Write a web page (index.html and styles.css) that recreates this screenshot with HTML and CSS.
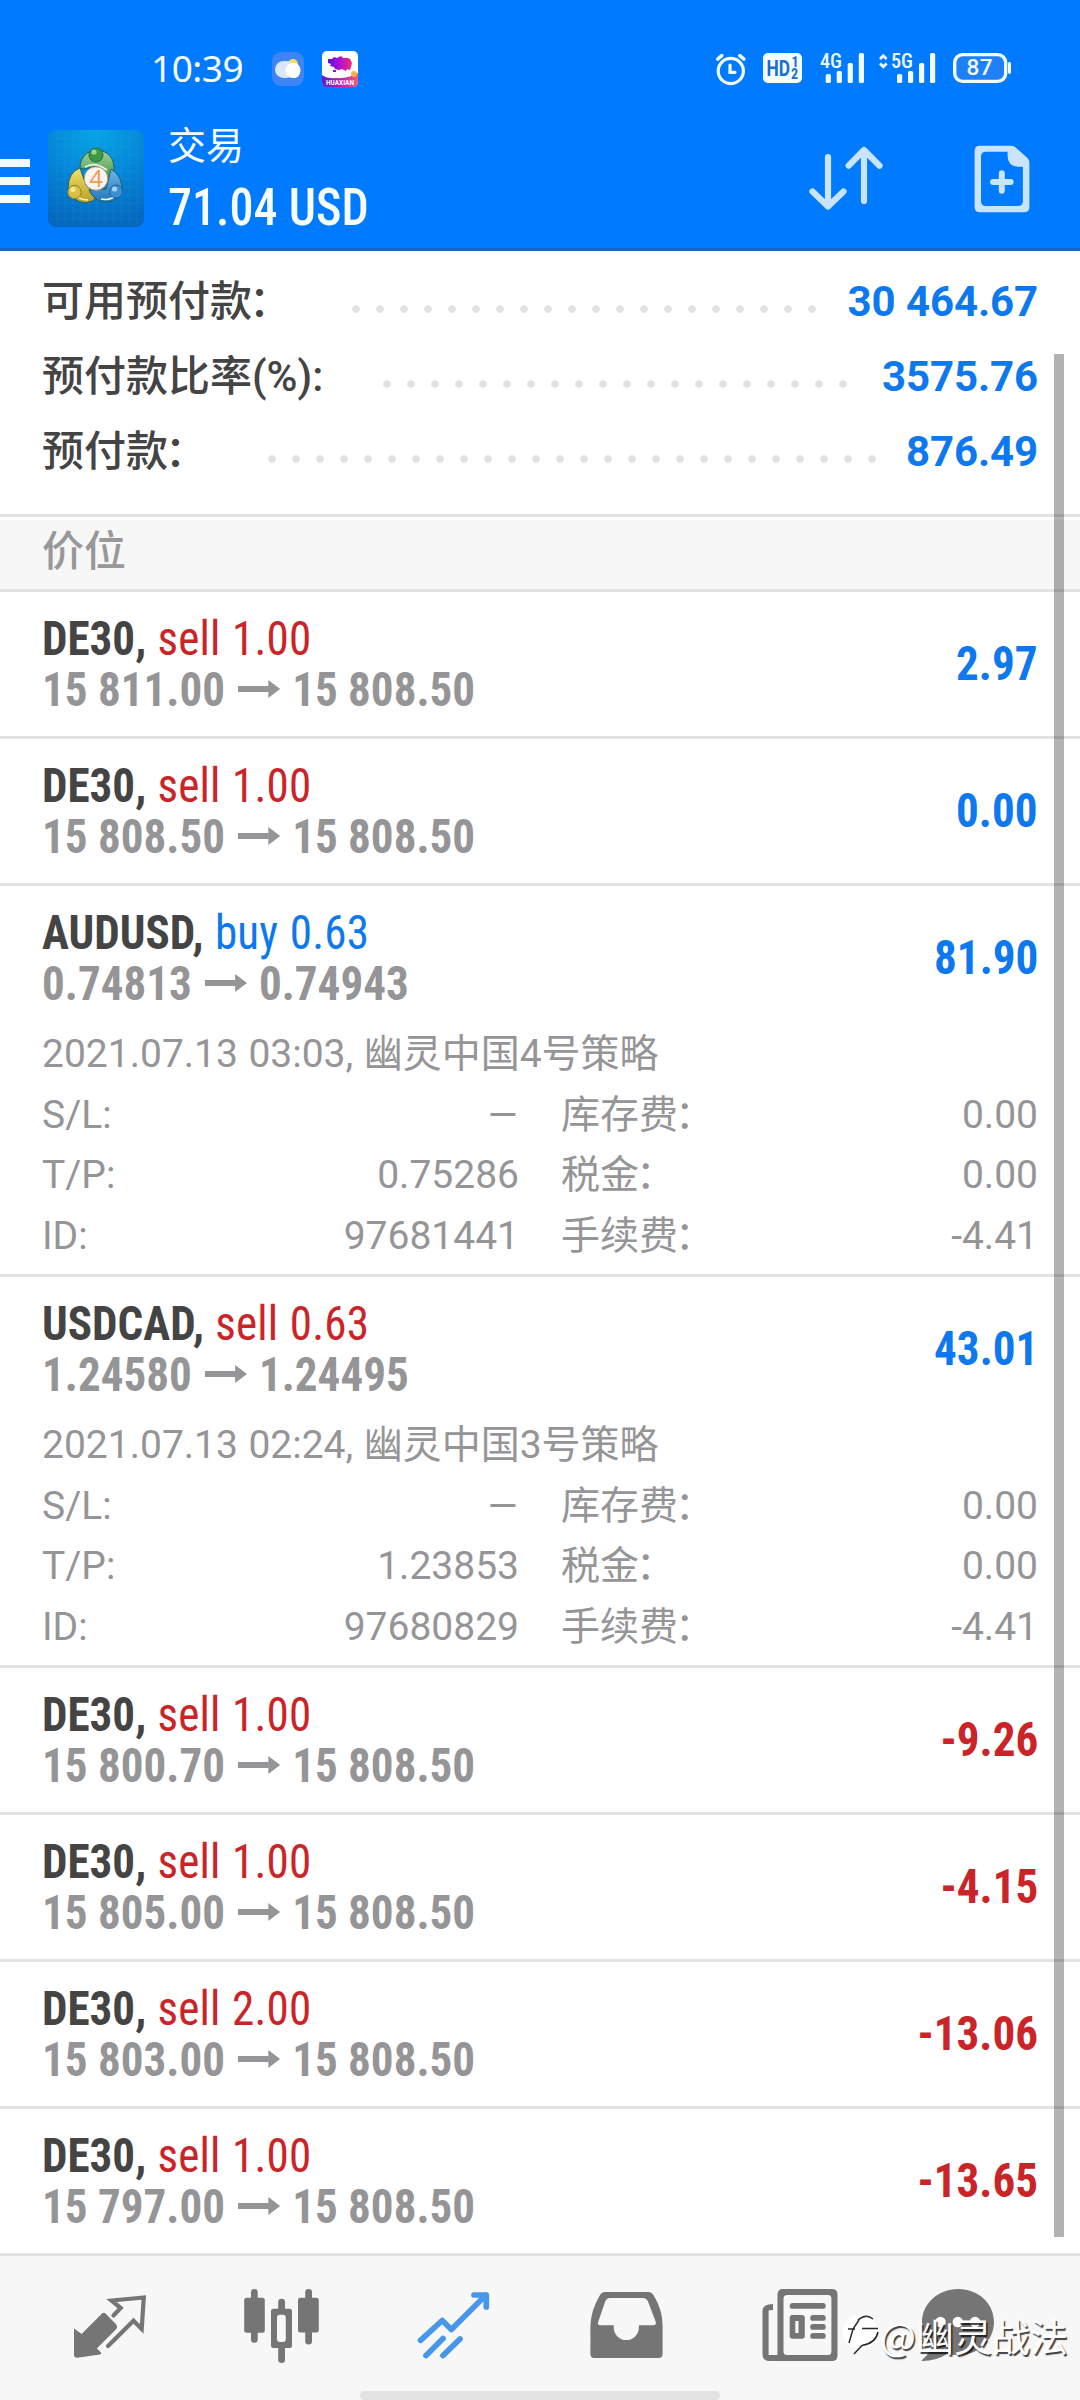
FILE: index.html
```html
<!DOCTYPE html>
<html lang="zh-CN">
<head>
<meta charset="utf-8">
<title>交易</title>
<link rel="stylesheet" href="styles.css">
</head>
<body>
<div class="screen">
  <header class="top">
    <div class="status">
      <span class="clock">10:39</span>
      <svg class="app-weather" width="32" height="34" viewBox="0 0 32 34">
        <rect width="32" height="34" rx="9" fill="#3d84f5"/>
        <circle cx="21" cy="12" r="5" fill="#f2e05a"/>
        <rect x="3" y="9" width="20" height="17" rx="8.5" fill="#d9e6fb"/>
        <circle cx="21" cy="18.5" r="7.5" fill="#fff"/>
        <rect x="16" y="11" width="12" height="15" rx="6" fill="#fff"/>
      </svg>
      <svg class="app-promo" width="36" height="36" viewBox="0 0 36 36">
        <defs>
          <linearGradient id="promo"><stop offset="0" stop-color="#5a12d8"/><stop offset=".5" stop-color="#b010d8"/><stop offset="1" stop-color="#f0306a"/></linearGradient>
          <linearGradient id="band"><stop offset="0" stop-color="#5a1fd0"/><stop offset=".5" stop-color="#b51fb0"/><stop offset="1" stop-color="#f05a80"/></linearGradient>
        </defs>
        <rect width="36" height="36" rx="5" fill="#fff"/>
        <path d="M0 24Q6 28 14 27Q26 28 36 22V31Q36 36 31 36H5Q0 36 0 31Z" fill="url(#band)"/>
        <path d="M6 8L10 8L12 6L15 7L19 5L21 7L26 7L28 8L30 12L29 16L28 19L25 18L24 20L20 18L17 19L13 18L12 16L8 15L9 13L6 12ZM11 19H14V21H11Z" fill="url(#promo)"/>
        <circle cx="32" cy="23" r="3" fill="#f8b04a"/>
        <text x="18" y="33.5" text-anchor="middle" class="promo-text" textLength="28" lengthAdjust="spacingAndGlyphs">HUAXIAN</text>
      </svg>
      <svg class="status-icons" width="300" height="40" viewBox="714 48 300 40">
        <g fill="none" stroke="#f2fbff" stroke-width="3.2" stroke-linecap="round">
          <circle cx="730.8" cy="71" r="12.6"/>
          <path d="M717.8 59L721.8 55.6M739.8 55.6L743.8 59" stroke-width="3.6"/>
          <path d="M730 65V72.3H735"/>
        </g>
        <rect x="763" y="53" width="39" height="30" rx="5" fill="#f2fffc"/>
        <text x="766.5" y="76" class="hd" textLength="23.5" lengthAdjust="spacingAndGlyphs">HD</text>
        <text x="791.5" y="66.5" class="hd-small">1</text>
        <text x="791" y="79" class="hd-small">2</text>
        <text x="820" y="68" class="net" textLength="22" lengthAdjust="spacingAndGlyphs">4G</text>
        <text x="891" y="68" class="net" textLength="22" lengthAdjust="spacingAndGlyphs">5G</text>
        <g fill="#f2fbff">
          <rect x="825.7" y="74" width="5.2" height="9" rx="1.6"/><rect x="836.7" y="71" width="5.2" height="12" rx="1.6"/><rect x="847.7" y="63" width="5.2" height="20" rx="1.6"/><rect x="858.8" y="53" width="5.2" height="30" rx="1.6"/>
          <rect x="897" y="74" width="5.2" height="9" rx="1.6"/><rect x="908" y="71" width="5.2" height="12" rx="1.6"/><rect x="919" y="63" width="5.2" height="20" rx="1.6"/><rect x="930" y="53" width="5.2" height="30" rx="1.6"/>
        </g>
        <path d="M880 59L883.3 55.7L886.6 59M880 63.5L883.3 66.8L886.6 63.5" fill="none" stroke="#f2fbff" stroke-width="2.8"/>
        <rect x="954.7" y="54.6" width="51" height="26.8" rx="8" fill="#1f80f8" stroke="#f2fbff" stroke-width="3.4"/>
        <rect x="1008" y="62" width="3" height="12" rx="1.4" fill="#f2fbff"/>
        <text x="979.8" y="75.2" text-anchor="middle" class="battery">87</text>
      </svg>
    </div>
    <div class="bar">
      <svg class="menu" width="30" height="44" viewBox="0 0 30 44"><path d="M0 0H30V8H0ZM0 18H30V26H0ZM0 36H30V44H0Z" fill="#f2fbff"/></svg>
      <svg class="logo" width="96" height="97" viewBox="0 0 96 97">
        <defs>
          <radialGradient id="lbg" cx=".5" cy="0" r="1"><stop offset="0" stop-color="#05a6e6"/><stop offset=".5" stop-color="#0587d8"/><stop offset="1" stop-color="#0468bd"/></radialGradient>
          <linearGradient id="gr" x2="0" y2="1"><stop offset="0" stop-color="#a5d49a"/><stop offset="1" stop-color="#2f8a3c"/></linearGradient>
          <linearGradient id="ye" x2="0" y2="1"><stop offset="0" stop-color="#f0e26a"/><stop offset="1" stop-color="#b8a020"/></linearGradient>
          <linearGradient id="bl" x2="0" y2="1"><stop offset="0" stop-color="#6db7e8"/><stop offset="1" stop-color="#2474b8"/></linearGradient>
        </defs>
        <rect width="96" height="97" rx="8" fill="url(#lbg)"/>
        <path d="M9 2V95M17 2V95M25 2V95M33 2V95M41 2V95M49 2V95M57 2V95M65 2V95M73 2V95M81 2V95M89 2V95M2 9H94M2 17H94M2 25H94M2 33H94M2 41H94M2 49H94M2 57H94M2 65H94M2 73H94M2 81H94M2 89H94" stroke="#4fc0f0" stroke-opacity=".12"/>
        <g stroke="#1c5f66" stroke-width="1">
          <path d="M32 38A17 17 0 1 1 62 48L58 54L49 36L36 39Z" fill="url(#gr)"/>
          <path d="M32 38Q20 42 20 59Q24 72 38 73Q45 72 49 67L38 55Z" fill="url(#ye)"/>
          <path d="M63 39Q75 46 74 62Q67 74 54 72Q44 68 41 60L58 59Z" fill="url(#bl)"/>
        </g>
        <path d="M37 37Q47 31 59 40M24 60Q28 70 40 70M69 64Q64 71 53 69" fill="none" stroke="#eef6dc" stroke-width="1.6"/>
        <circle cx="48" cy="25" r="7" fill="#3f9a45" stroke="#216a3a"/>
        <circle cx="46" cy="22" r="2.6" fill="#9cd494"/>
        <circle cx="26.5" cy="62" r="6.7" fill="#d9bf45" stroke="#8d8130"/>
        <circle cx="25" cy="59.5" r="2.6" fill="#f4e896"/>
        <circle cx="68" cy="61.5" r="6.5" fill="#3c8fd2" stroke="#22609a"/>
        <circle cx="66.5" cy="59" r="2.6" fill="#9fd2f4"/>
        <circle cx="48" cy="48.5" r="11.7" fill="#f7f4f2" stroke="#b8a08c"/>
        <text x="48" y="57" text-anchor="middle" class="logo-num">4</text>
      </svg>
      <div class="title">
        <div class="title-name">交易</div>
        <div class="title-sum">71.04 USD</div>
      </div>
      <svg class="sort" width="80" height="70" viewBox="806 144 80 70" fill="none" stroke="#c9e4fc" stroke-width="6.2" stroke-linecap="round" stroke-linejoin="round">
        <path d="M828 157V206.5M812.5 191.5L828 206.5L843.5 191.5M864 201V150M848.7 165.7L864 150L879.5 165.7"/>
      </svg>
      <svg class="new" width="56" height="68" viewBox="974 145 56 68">
        <path fill-rule="evenodd" fill="#c9e4fc" d="M980 145.7H1011Q1014 145.7 1016 147.7L1027.5 158Q1029.4 160 1029.4 162.5V207Q1029.4 212.3 1024 212.3H980Q974.6 212.3 974.6 207V151Q974.6 145.7 980 145.7ZM986 151.7Q981 151.7 981 156.7V201Q981 206 986 206H1018Q1022.9 206 1022.9 201V166.8H1018Q1007.6 166 1007.6 156V151.7Z"/>
        <path d="M1001.8 173.2V190.8M993 182H1010.6" stroke="#c9e4fc" stroke-width="6" stroke-linecap="round"/>
      </svg>
    </div>
  </header>

  <section class="summary">
    <div class="sum-row"><span class="sum-label">可用预付款<span class="colon">：</span></span><span class="dots"></span><span class="sum-value v1">30 464.67</span></div>
    <div class="sum-row"><span class="sum-label">预付款比率(%):</span><span class="dots"></span><span class="sum-value v2">3575.76</span></div>
    <div class="sum-row"><span class="sum-label">预付款<span class="colon">：</span></span><span class="dots wide"></span><span class="sum-value v3">876.49</span></div>
  </section>

  <h2 class="section-head">价位</h2>

  <main class="positions">
    <article class="pos"><div class="pos-main"><div class="pos-text"><div class="line1"><b>DE30,</b> <span class="sell">sell 1.00</span></div><div class="line2">15 811.00<i class="arrow"></i>15 808.50</div></div><div class="profit">2.97</div></div></article>
    <article class="pos"><div class="pos-main"><div class="pos-text"><div class="line1"><b>DE30,</b> <span class="sell">sell 1.00</span></div><div class="line2">15 808.50<i class="arrow"></i>15 808.50</div></div><div class="profit">0.00</div></div></article>
    <article class="pos open">
      <div class="pos-main"><div class="pos-text"><div class="line1"><b>AUDUSD,</b> <span class="buy">buy 0.63</span></div><div class="line2">0.74813<i class="arrow"></i>0.74943</div></div><div class="profit">81.90</div></div>
      <div class="details">
        <div class="full">2021.07.13 03:03, 幽灵中国4号策略</div>
        <div class="cell"><span>S/L:</span><span class="dash">–</span></div><div class="cell"><span>库存费<span class="colon">：</span></span><span>0.00</span></div>
        <div class="cell"><span>T/P:</span><span>0.75286</span></div><div class="cell"><span>税金<span class="colon">：</span></span><span>0.00</span></div>
        <div class="cell"><span>ID:</span><span>97681441</span></div><div class="cell"><span>手续费<span class="colon">：</span></span><span>-4.41</span></div>
      </div>
    </article>
    <article class="pos open">
      <div class="pos-main"><div class="pos-text"><div class="line1"><b>USDCAD,</b> <span class="sell">sell 0.63</span></div><div class="line2">1.24580<i class="arrow"></i>1.24495</div></div><div class="profit">43.01</div></div>
      <div class="details">
        <div class="full">2021.07.13 02:24, 幽灵中国3号策略</div>
        <div class="cell"><span>S/L:</span><span class="dash">–</span></div><div class="cell"><span>库存费<span class="colon">：</span></span><span>0.00</span></div>
        <div class="cell"><span>T/P:</span><span>1.23853</span></div><div class="cell"><span>税金<span class="colon">：</span></span><span>0.00</span></div>
        <div class="cell"><span>ID:</span><span>97680829</span></div><div class="cell"><span>手续费<span class="colon">：</span></span><span>-4.41</span></div>
      </div>
    </article>
    <article class="pos"><div class="pos-main"><div class="pos-text"><div class="line1"><b>DE30,</b> <span class="sell">sell 1.00</span></div><div class="line2">15 800.70<i class="arrow"></i>15 808.50</div></div><div class="profit loss">-9.26</div></div></article>
    <article class="pos"><div class="pos-main"><div class="pos-text"><div class="line1"><b>DE30,</b> <span class="sell">sell 1.00</span></div><div class="line2">15 805.00<i class="arrow"></i>15 808.50</div></div><div class="profit loss">-4.15</div></div></article>
    <article class="pos"><div class="pos-main"><div class="pos-text"><div class="line1"><b>DE30,</b> <span class="sell">sell 2.00</span></div><div class="line2">15 803.00<i class="arrow"></i>15 808.50</div></div><div class="profit loss">-13.06</div></div></article>
    <article class="pos"><div class="pos-main"><div class="pos-text"><div class="line1"><b>DE30,</b> <span class="sell">sell 1.00</span></div><div class="line2">15 797.00<i class="arrow"></i>15 808.50</div></div><div class="profit loss">-13.65</div></div></article>
  </main>

  <nav class="tabs">
    <svg width="172" height="144" viewBox="24 2256 172 144">
      <path d="M74 2329.5Q74 2328 75.5 2329.5L81.6 2334L101.5 2314Q103.5 2312 105.5 2313.5L116.3 2324.5Q118 2327 116.3 2329L96.8 2348.5L101 2352.5Q102 2354 100 2354.5L77 2357.8Q74 2357.8 74 2355Z" fill="#757575"/>
      <path d="M113.5 2315.5L120.7 2308L111.5 2300.5L143.8 2297.5L141.7 2329L133.5 2320.8L108 2346" fill="none" stroke="#757575" stroke-width="4.2" stroke-linecap="round" stroke-linejoin="miter"/>
    </svg>
    <svg width="172" height="144" viewBox="196 2256 172 144" fill="#757575">
      <rect x="244.2" y="2297.7" width="20.6" height="35" rx="2.5"/><rect x="251" y="2289" width="6.7" height="53.8" rx="3.3"/>
      <rect x="298" y="2297.7" width="20.8" height="34.7" rx="2.5"/><rect x="305.2" y="2289" width="6.8" height="55.5" rx="3.3"/>
      <path d="M278.2 2308.7V2302Q278.2 2298.7 281.6 2298.7Q285 2298.7 285 2302V2308.7H289.5Q292 2308.7 292 2311.2V2345.5Q292 2348 289.5 2348H285V2359.7Q285 2363 281.6 2363Q278.2 2363 278.2 2359.7V2348H273.5Q271 2348 271 2345.5V2311.2Q271 2308.7 273.5 2308.7ZM280 2314.7Q277 2314.7 277 2317.7V2339Q277 2342 280 2342H282.8Q285.8 2342 285.8 2339V2317.7Q285.8 2314.7 282.8 2314.7Z" fill-rule="evenodd"/>
    </svg>
    <svg width="173" height="144" viewBox="368 2256 173 144" fill="none" stroke="#4796ea" stroke-width="5.7" stroke-linecap="round" stroke-linejoin="round">
      <path d="M420.5 2340.3L442.2 2320.5L451.4 2329.5L486 2295M474 2295H486.3V2307M426 2355.5L443 2338.5M443 2355.5L460 2339"/>
    </svg>
    <svg width="173" height="144" viewBox="541 2256 173 144" fill="#757575">
      <path fill-rule="evenodd" d="M605 2292H648.5Q652 2292 654 2296Q662.6 2310 662.6 2326V2354Q662.6 2358 658.5 2358H594.5Q590.4 2358 590.4 2354V2326Q591 2310 599.5 2296Q601.5 2292 605 2292ZM610 2298Q606.5 2298 605 2302L598 2322.5Q597.5 2325.3 600 2325.3H613.7V2327.5A12.6 12.6 0 0 0 638.9 2327.5V2325.3H653.5Q656.5 2325 655.8 2322L648 2301.5Q646.5 2298 643 2298Z"/>
    </svg>
    <svg width="173" height="144" viewBox="714 2256 173 144" fill="#757575">
      <path fill-rule="evenodd" d="M783 2289H832Q837.5 2289 837.5 2294.5V2355.5Q837.5 2361 832 2361H769Q762.5 2361 762.5 2354V2311Q762.5 2304 773 2304V2310Q768.6 2310 768.6 2311V2355H777.5V2294.5Q777.5 2289 783 2289ZM787 2295Q783.5 2295 783.5 2298.5V2351.5Q783.5 2355 787 2355H828Q831.4 2355 831.4 2351.5V2298.5Q831.4 2295 828 2295Z"/>
      <rect x="789.7" y="2303" width="36" height="5.8" rx="2.9"/>
      <path fill-rule="evenodd" d="M792.5 2315H802Q804.8 2315 804.8 2318V2336Q804.8 2338.8 802 2338.8H792.5Q789.7 2338.8 789.7 2336V2318Q789.7 2315 792.5 2315ZM795.3 2321V2333H798.5V2321Z"/>
      <rect x="810.2" y="2315" width="15.5" height="5.8" rx="2.9"/><rect x="810.2" y="2324" width="15.5" height="5.8" rx="2.9"/><rect x="810.2" y="2333" width="15.5" height="5.8" rx="2.9"/>
    </svg>
    <svg width="193" height="144" viewBox="887 2256 193 144">
      <path d="M958 2289C979 2289 994 2304 994 2322S979 2355 958 2355Q951 2355 947 2354Q936 2361 922.5 2361Q921 2361 922.5 2359.5Q930 2353 932 2346Q922 2336 922 2322C922 2304 938 2289 958 2289Z" fill="#757575"/>
      <circle cx="940.5" cy="2322" r="5.2" fill="#fff"/><circle cx="957.8" cy="2322" r="5.2" fill="#fff"/><circle cx="975" cy="2322" r="5.2" fill="#fff"/>
    </svg>
  </nav>
  <div class="home-indicator"></div>
  <div class="watermark">
    <svg width="38" height="46" viewBox="842 2320 38 46">
      <circle cx="860" cy="2340" r="17.5" fill="#fff"/>
      <path d="M858 2328Q866 2321 873 2327M878 2340Q876 2351 862 2353.5L854 2362M849 2351L853 2337L859 2328M848 2337H855M862 2336.500H878" fill="none" stroke="#2a2a2a" stroke-width="1.5"/>
    </svg><span>@幽灵战法</span>
  </div>
  <div class="scrollbar"></div>
</div>
</body>
</html>
```
FILE: styles.css
```css
* { box-sizing: border-box; }
body { margin: 0; background: #fff; font-family: Roboto, "Noto Sans CJK SC", sans-serif; color: #444; }
svg { display: block; flex: none; }
.screen { position: relative; width: 1080px; height: 2400px; overflow: hidden; display: flex; flex-direction: column; }

.top { height: 251px; background: #007aff; border-bottom: 3px solid #1268c4; color: #f7fdff; }
.status { height: 116px; padding-top: 48px; display: flex; align-items: flex-start; }
.clock { width: 121px; margin-left: 151px; font: 400 37px/39px "Noto Sans", sans-serif; letter-spacing: -.5px; }
.app-weather { margin-top: 4px; }
.app-promo { margin: 3px 356px 0 18px; }
.promo-text { font: 700 7px Roboto, sans-serif; fill: #fff; }
.hd { font: 700 22px Roboto, sans-serif; fill: #1a6fd0; }
.hd-small { font: 700 14px "Roboto Condensed", sans-serif; fill: #1a6fd0; }
.net { font: 500 21px "Roboto Condensed", sans-serif; fill: #f2fbff; }
.battery { font: 500 22.5px Roboto, sans-serif; fill: #f2fbff; letter-spacing: .5px; }
.logo-num { font: 400 23px "Open Sans", sans-serif; fill: #f09a4a; }
.bar { display: flex; align-items: flex-start; height: 132px; }
.menu { margin-top: 43px; }
.logo { margin: 14px 24px 0 18px; }
.title { flex: 1; line-height: 61px; }
.title-name { font-size: 38px; }
.title-sum { font-family: "Roboto Condensed", sans-serif; font-size: 52px; font-weight: 500; transform: scaleX(.925); transform-origin: 0 0; }
.sort { margin: 28px 88px 0 0; }
.new { margin: 29px 50px 0 0; }

.summary { height: 263px; padding: 13px 42px 0; }
.sum-row { display: flex; align-items: center; height: 75px; font-size: 42px; line-height: 75px; white-space: nowrap; }
.sum-label { flex: 1; font-weight: 500; }
.colon { margin-left: -3px; }
.dots { width: 480px; height: 24px; margin-top: 14px; background: radial-gradient(circle at center, #e2e2e2 3.4px, transparent 4.2px) 0 0 / 24px 24px repeat-x; }
.dots.wide { width: 624px; }
.sum-value { font-weight: 700; color: #0e78ee; text-align: right; letter-spacing: -.1px; }
.v1 { width: 214px; }
.v2 { width: 183px; }
.v3 { width: 154px; }

.section-head { height: 78px; margin: 0; padding-left: 42px; border-top: 3px solid #e2e2e2; border-bottom: 3px solid #e2e2e2; background: #f7f7f7; box-shadow: inset 0 3px #fff; font-size: 42px; font-weight: 500; line-height: 70px; color: #98989a; }

.pos { height: 147px; border-bottom: 3px solid #e2e2e2; padding: 21px 42px 0; }
.pos.open { height: 391px; }
.pos:last-child { border-bottom: 0; height: 144px; }
.pos-main { display: flex; justify-content: space-between; align-items: center; font: 400 49px/51px "Roboto Condensed", sans-serif; white-space: nowrap; }
.pos-text { transform: scaleX(.92); transform-origin: 0 0; }
.line1 { word-spacing: 1px; }
.line1 span { letter-spacing: .2px; }
.sell { color: #cb2428; }
.buy { color: #0e78ee; }
.line2 { font-weight: 700; color: #959597; }
.arrow { display: inline-block; width: 46px; height: 18px; margin: 0 13px 0 14px; vertical-align: 8px; background: #959597; clip-path: polygon(0 34%, 72% 34%, 72% 0, 100% 50%, 72% 100%, 72% 66%, 0 66%); }
.profit { margin-top: -1px; font-weight: 700; color: #0e78ee; transform: scaleX(.92); transform-origin: 100% 0; }
.profit.loss { color: #cb2428; }
.details { display: grid; grid-template-columns: 477px 477px; column-gap: 42px; margin-top: 15px; grid-auto-rows: 60.7px; font-size: 39px; line-height: 60.7px; color: #959597; }
.full { grid-column: 1 / 3; word-spacing: .8px; }
.cell { display: flex; justify-content: space-between; }
.dash { transform: scaleX(1.3); transform-origin: 85% 50%; }

.tabs { display: flex; height: 147px; padding-left: 24px; border-top: 3px solid #e2e2e2; background: #f7f7f7; }
.home-indicator { position: absolute; left: 360px; top: 2391px; width: 360px; height: 9px; border-radius: 5px; background: #e3e3e3; }
.watermark { position: absolute; left: 842px; top: 2307px; display: flex; align-items: center; color: #fff; font: 400 38px/56px "Noto Sans CJK SC", sans-serif; text-shadow: 1.5px 1.5px 1px rgba(0, 0, 0, .75); white-space: nowrap; }
.scrollbar { position: absolute; left: 1054px; top: 354px; width: 10px; height: 1883px; background: rgba(0, 0, 0, .3); }
```
